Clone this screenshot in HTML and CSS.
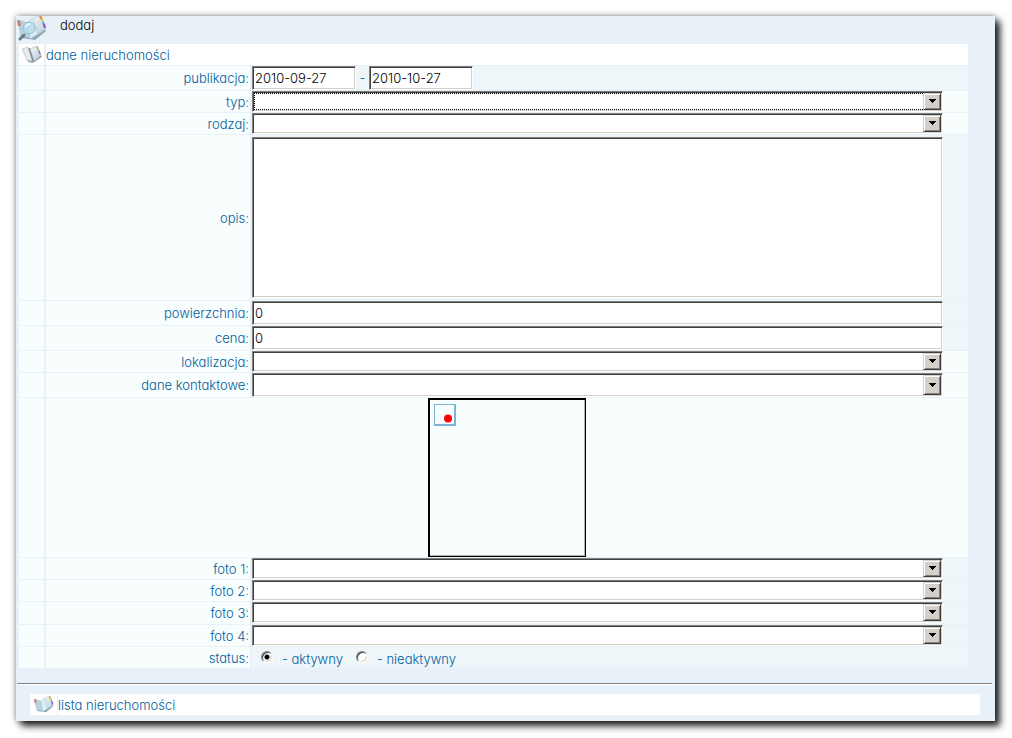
FILE: index.html
```html
<!DOCTYPE html>
<html lang="pl">
<head>
<meta charset="utf-8">
<title>dodaj</title>
<link rel="stylesheet" href="styles.css">
</head>
<body>
<svg class="defs" aria-hidden="true">
  <defs>
    <linearGradient id="page" x1="0" y1="0" x2="1" y2="1">
      <stop offset="0" stop-color="#f6fafc"/>
      <stop offset="1" stop-color="#b4c8d3"/>
    </linearGradient>
    <symbol id="map" viewBox="0 0 30 26">
      <path d="M3 7L5 22L18 24L29 15L27 8Z" fill="#8fa5b2"/>
      <path d="M1 4L10 7L13 22L4 20Z" fill="#b9d3e0" stroke="#9db4c1" stroke-width=".6"/>
      <path d="M10 7L16 2L21 18L13 23Z" fill="#d9edf5" stroke="#a9c2cf" stroke-width=".6"/>
      <path d="M16 2L24 0L29 13L21 18Z" fill="url(#page)" stroke="#b9cad3" stroke-width=".6"/>
      <path d="M0 4l3 1l1 5l-3 0z" fill="#d07a62"/>
      <path d="M23 0l2 4" stroke="#f08a24" stroke-width="2"/>
      <path d="M25 3l1 3" stroke="#c8d84a" stroke-width="2"/>
      <path d="M26 6l1 3" stroke="#4aa0e8" stroke-width="2"/>
      <path d="M27 8l1 4" stroke="#8a50d8" stroke-width="2"/>
      <path d="M19 7l4-2M20 11l5-3M21 14l5-3" stroke="#d5dfe4"/>
    </symbol>
    <symbol id="lens" viewBox="0 0 30 26">
      <circle cx="12" cy="12" r="6" fill="#b5dcee" fill-opacity=".8" stroke="#9bbccc"/>
      <path d="M9 11a4 4 0 0 1 4-3" fill="none" stroke="#f2fbff" stroke-width="1.500"/>
      <path d="M7 19L3 23" stroke="#657b88" stroke-width="3" stroke-linecap="round"/>
    </symbol>
    <symbol id="book" viewBox="0 0 20 18">
      <path d="M2 6L6 16L11 17L20 11L18 7Z" fill="#a3a7aa"/>
      <path d="M0 3L6 1L11 15L5 14Z" fill="#e6ebee" stroke="#b9c0c4" stroke-width=".7"/>
      <path d="M8 3L15 0L19 9L12 15Z" fill="url(#page)" stroke="#b3bec4" stroke-width=".7"/>
      <path d="M7 2L11 15" stroke="#858e94" stroke-width="1.500"/>
      <path d="M15 0l1 3" stroke="#f0a044" stroke-width="1.500"/>
      <path d="M16 3l1 2" stroke="#9fd05a" stroke-width="1.500"/>
      <path d="M17 5l1 3" stroke="#7f74dc" stroke-width="1.500"/>
    </symbol>
  </defs>
</svg>
<main class="panel">
  <header class="title">
    <svg class="title-icon" aria-hidden="true"><use href="#map"/><use href="#lens"/></svg>
    <h1>dodaj</h1>
  </header>
  <form>
    <table class="form">
      <colgroup><col class="col-icon"><col class="col-label"><col></colgroup>
      <tr class="head"><th><svg class="row-icon" aria-hidden="true"><use href="#book"/></svg></th><th colspan="2">dane nieruchomości</th></tr>
      <tr class="mid"><td></td><th><label for="od">publikacja:</label></th><td class="tint"><div class="dates"><input class="field date" id="od" value="2010-09-27"><span>-</span><input class="field date" aria-label="publikacja do" value="2010-10-27"></div></td></tr>
      <tr><td></td><th><label for="typ">typ:</label></th><td><div class="combo active"><select class="field" id="typ"><option></option></select></div></td></tr>
      <tr><td></td><th><label for="rodzaj">rodzaj:</label></th><td><div class="combo"><select class="field" id="rodzaj"><option></option></select></div></td></tr>
      <tr class="text"><td></td><th><label for="opis">opis:</label></th><td class="tint"><textarea class="field" id="opis"></textarea></td></tr>
      <tr class="mid"><td></td><th><label for="pow">powierzchnia:</label></th><td class="tint"><input class="field" id="pow" value="0"></td></tr>
      <tr class="mid"><td></td><th><label for="cena">cena:</label></th><td class="tint"><input class="field" id="cena" value="0"></td></tr>
      <tr><td></td><th><label for="lok">lokalizacja:</label></th><td><div class="combo"><select class="field" id="lok"><option></option></select></div></td></tr>
      <tr class="mid"><td></td><th><label for="kontakt">dane kontaktowe:</label></th><td><div class="combo tall"><select class="field" id="kontakt"><option></option></select></div></td></tr>
      <tr class="photo"><td></td><td colspan="2"><div class="frame"><svg class="marker" viewBox="0 0 22 22" aria-hidden="true"><path d="M0 0H22V22H0Z" fill="#7fb3d6"/><path d="M1 1H20V20H1Z" fill="#f8fdfe"/><circle cx="14" cy="14.500" r="4" fill="#f00"/></svg></div></td></tr>
      <tr><td></td><th><label for="f1">foto 1:</label></th><td class="tint"><div class="combo"><select class="field" id="f1"><option></option></select></div></td></tr>
      <tr><td></td><th><label for="f2">foto 2:</label></th><td class="tint"><div class="combo"><select class="field" id="f2"><option></option></select></div></td></tr>
      <tr class="last-photo"><td></td><th><label for="f3">foto 3:</label></th><td class="tint"><div class="combo"><select class="field" id="f3"><option></option></select></div></td></tr>
      <tr><td></td><th><label for="f4">foto 4:</label></th><td class="tint"><div class="combo"><select class="field" id="f4"><option></option></select></div></td></tr>
      <tr><td></td><th>status:</th><td class="tint"><div class="status"><input type="radio" name="status" id="on" checked><label for="on">- aktywny</label><input type="radio" name="status" id="off"><label for="off">- nieaktywny</label></div></td></tr>
    </table>
  </form>
  <hr>
  <nav class="list">
    <span class="list-icon"><svg class="row-icon" aria-hidden="true"><use href="#map"/></svg></span>
    <a href="#">lista nieruchomości</a>
  </nav>
</main>
</body>
</html>
```
FILE: styles.css
```css
* { box-sizing: border-box; }

body {
  margin: 0;
  padding: 16px 17px 17px 16px;
  background: #fff;
  color: #005c9c;
  font: 300 13px/16px Inter, "Liberation Sans", sans-serif;
  font-feature-settings: "cv11";
}

.defs { position: absolute; width: 0; height: 0; }

.panel {
  padding-bottom: 6px;
  background: #e8f0f8;
  box-shadow: 5px 5px 7px rgba(0, 0, 0, .85), 0 0 6px rgba(0, 0, 0, .45);
}

.title { display: flex; align-items: flex-start; height: 28px; padding: 0 1px; gap: 13px; }
.title-icon { width: 30px; height: 26px; }
.title h1 { margin: 1px 0 0; color: #000; font-size: 13px; line-height: 16px; font-weight: 300; }

.form { width: calc(100% - 30px); margin-left: 3px; border-collapse: collapse; table-layout: fixed; }
.form tr { height: 22px; border-bottom: 1px solid #e8f0f8; }
.form .head { height: 21px; }
.form .mid { height: 25px; }
.form .last-photo { height: 23px; }
.form .text { height: 166px; }
.form .photo { height: 160px; }
.form td, .form th { padding: 0; background: #f8fdfe; background-clip: padding-box; }
.form th { padding: 1px 1px 0; font-weight: 300; text-align: right; vertical-align: middle; }
.form th + td { vertical-align: top; }
.form td:first-child, .form th:first-child { border-right: 2px solid #e8f0f8; }
.form td + th { border-right: 2px solid #e8f0f8; }
.form .tint { background: #eef6fa; background-clip: padding-box; }
.form .head th { padding: 1px 0 0; background-color: #fff; text-align: left; }
.col-icon { width: 26px; }
.col-label { width: 206px; }
.row-icon { display: block; width: 20px; height: 18px; margin: 0 auto; }

.field {
  display: block;
  width: 100%;
  height: 24px;
  margin: 0;
  padding: 2px;
  border: 1px solid;
  border-color: #808080 #fff #fff #808080;
  border-radius: 0;
  outline: 0;
  background: #fff;
  box-shadow: inset 1px 1px #404040, inset -1px -1px #d4d0c8;
  color: #000;
  font: inherit;
  font-feature-settings: inherit;
  appearance: none;
}
td > .field, .combo { width: calc(100% - 25px); }
textarea.field { height: 161px; margin-top: 2px; resize: none; }
.combo { position: relative; }
.combo .field { height: 21px; }
.combo.tall .field { height: 24px; }
.combo::after {
  content: "";
  position: absolute;
  inset: 2px 2px 2px auto;
  width: 16px;
  border: 1px solid;
  border-color: #d4d0c8 #404040 #404040 #d4d0c8;
  background: #d4d0c8 url("data:image/svg+xml,%3Csvg xmlns='http://www.w3.org/2000/svg' width='7' height='4' shape-rendering='crispEdges'%3E%3Cpath d='M0 0H7V1H6V2H5V3H4V4H3V3H2V2H1V1H0Z'/%3E%3C/svg%3E") center no-repeat;
  box-shadow: inset 1px 1px #fff, inset -1px -1px #808080;
  pointer-events: none;
}
.combo.active::before {
  content: "";
  position: absolute;
  inset: 2px 18px 2px 2px;
  border: 1px dotted #000;
  pointer-events: none;
}

.dates { display: flex; align-items: center; }
.date { width: 104px; }
.dates span { width: 13px; text-align: center; }

.frame {
  width: 158px;
  height: 159px;
  margin: 0 auto;
  padding: 5px;
  border: 1px solid #000;
  box-shadow: inset 1px 1px #000, inset -1px -1px #b0b0b0;
}
.marker { display: block; width: 22px; height: 22px; }

.status { display: flex; align-items: center; padding: 4px 0 0 9px; }
.status input {
  width: 12px;
  height: 12px;
  margin: 0 9px 4px 0;
  border: 1px solid;
  border-color: #808080 #fff #fff #808080;
  border-radius: 50%;
  background: #fff;
  box-shadow: inset 1px 1px #404040, inset -1px -1px #d4d0c8;
  appearance: none;
}
.status input:checked { background: radial-gradient(circle, #000 2px, #fff 3px); }
.status label { margin-right: 13px; }

hr { height: 2px; margin: 14px 3px 9px 1px; border: 0; border-top: 1px solid #808080; border-bottom: 1px solid #fff; }

.list { display: flex; gap: 1px; height: 21px; margin: 0 15px 0 14px; }
.list-icon { width: 27px; padding: 2px 0; background: #fff; }
.list a { flex: 1; background: #fff; color: inherit; line-height: 22px; text-decoration: none; }
```
